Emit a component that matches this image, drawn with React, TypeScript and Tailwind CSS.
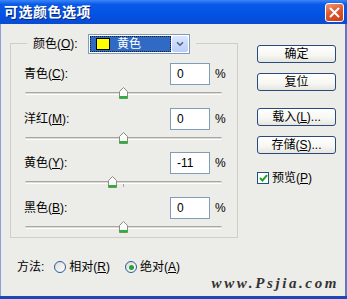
import React from "react";

interface Channel {
  label: string;
  hotkey: string;
  value: number;
  gap: string;
}

const channels: Channel[] = [
  { label: "青色", hotkey: "C", value: 0, gap: "mt-[9px]" },
  { label: "洋红", hotkey: "M", value: 0, gap: "mt-[7px]" },
  { label: "黄色", hotkey: "Y", value: -11, gap: "mt-[6px]" },
  { label: "黑色", hotkey: "B", value: 0, gap: "mt-[7px]" },
];

const Thumb = () => (
  <svg width="9" height="12" viewBox="0 0 9 12">
    <path d="M0.5 4.5 L4.5 0.5 L8.5 4.5 V11.5 H0.5 Z" fill="#fbfbf8" stroke="#8c8c86" />
    <rect x="0.5" y="9" width="8" height="2.5" fill="#2fae3a" />
  </svg>
);

const Slider = ({ value }: { value: number }) => {
  const center = 98.5 + value * 0.985;
  return (
    <div className="relative ml-[14px] h-[16px] w-[197px]">
      <div className="absolute left-0 right-0 top-[7px] h-[3px] rounded-[2px] border-t border-t-[#a7a6a0] border-b border-b-white bg-[#dcdbd5]" />
      <div className="absolute left-[98px] top-[10px] h-[3px] w-px bg-[#a7a6a0]" />
      <div className="absolute top-[2px]" style={{ left: center - 4.5 }}>
        <Thumb />
      </div>
    </div>
  );
};

const Button = ({ children, className }: { children: React.ReactNode; className?: string }) => (
  <div
    className={
      "flex h-[18px] w-[79px] items-center justify-center rounded-[3px] border border-[#2a4a7c] bg-[linear-gradient(180deg,#ffffff_0%,#f6f6f2_60%,#e6e5de_100%)] text-[12px] text-black " +
      (className ?? "")
    }
  >
    {children}
  </div>
);

const Radio = ({ checked }: { checked?: boolean }) => (
  <div className="flex h-[12px] w-[12px] items-center justify-center rounded-full border border-[#2a5a9a] bg-[linear-gradient(135deg,#dcdcd6,#ffffff)]">
    {checked ? <div className="h-[5px] w-[5px] rounded-full bg-[#28a238]" /> : null}
  </div>
);

export default function App() {
  return (
    <div className="h-[299px] w-[347px] overflow-hidden font-['Liberation_Sans','Noto_Sans_CJK_SC',sans-serif] text-[12px] text-black">
      <div className="flex h-[24px] items-center justify-between bg-[linear-gradient(180deg,#3b86f5_0%,#0a5ae9_18%,#0353e4_60%,#0a4bd2_100%)] pl-[4px] pr-[3px]">
        <span className="text-[14px] font-bold tracking-[0.5px] text-white [text-shadow:1px_1px_0_#0a2a80]">
          可选颜色选项
        </span>
        <div className="flex h-[19px] w-[19px] items-center justify-center rounded-[3px] border border-white bg-[linear-gradient(160deg,#ef9a78_0%,#e0582f_45%,#c83e18_100%)]">
          <svg width="11" height="11" viewBox="0 0 11 11">
            <path d="M1.5 1.5 L9.5 9.5 M9.5 1.5 L1.5 9.5" stroke="white" strokeWidth="2" strokeLinecap="round" />
          </svg>
        </div>
      </div>

      <div className="flex h-[272px] flex-col border-x border-l-[#8da0d6] border-r-[#5d78c8] bg-[#ecece8] border-r-2">
        <div className="flex pl-[9px] pt-[10px]">
          <div className="mt-[9px] w-[228px] border border-[#cfcfc6] pb-[2px]">
            <div className="-mt-[10px] ml-[16px] flex h-[20px] w-[169px] items-center bg-[#ecece8] pl-[6px]">
              <span className="w-[55px]">
                颜色(<u>O</u>):
              </span>
              <div className="flex h-[20px] w-[102px] items-center border border-[#7f9db9] bg-white p-px">
                <div className="flex h-full w-[82px] items-center border border-dotted border-[#1b1b1b] bg-[#316ac5] pl-[5px]">
                  <div className="h-[12px] w-[14px] border border-black bg-[#ffff00]" />
                  <span className="ml-[7px] text-white">黄色</span>
                </div>
                <div className="ml-px flex h-full w-[16px] items-center justify-center rounded-[2px] bg-[linear-gradient(180deg,#dde7fd,#b9cdf8)]">
                  <svg width="8" height="6" viewBox="0 0 8 6">
                    <path d="M1 1.2 L4 4.2 L7 1.2" stroke="#4d6185" strokeWidth="1.6" fill="none" />
                  </svg>
                </div>
              </div>
            </div>

            {channels.map((c) => (
              <div key={c.hotkey} className={c.gap}>
                <div className="flex h-[22px] items-center">
                  <span className="ml-[13px] w-[146px]">
                    {c.label}(<u>{c.hotkey}</u>):
                  </span>
                  <div className="flex h-[22px] w-[40px] items-center border border-[#7f9db9] bg-white pl-[6px]">
                    {c.value}
                  </div>
                  <span className="ml-[5px]">%</span>
                </div>
                <Slider value={c.value} />
              </div>
            ))}
          </div>

          <div className="ml-[19px] mt-[11px] flex flex-col">
            <Button>确定</Button>
            <Button className="mt-[10px]">复位</Button>
            <Button className="mt-[17px]">
              载入(<u>L</u>)...
            </Button>
            <Button className="mt-[10px]">
              存储(<u>S</u>)...
            </Button>
            <div className="mt-[15px] flex items-center">
              <div className="flex h-[12px] w-[12px] items-center justify-center border border-[#1c5180] bg-white">
                <svg width="9" height="8" viewBox="0 0 9 8">
                  <path d="M1 4 L3.5 6.5 L8 1.2" stroke="#21a121" strokeWidth="2" fill="none" />
                </svg>
              </div>
              <span className="ml-[3px]">
                预览(<u>P</u>)
              </span>
            </div>
          </div>
        </div>

        <div className="ml-[16px] mt-[21px] flex h-[16px] items-center">
          <span>方法:</span>
          <div className="ml-[10px]">
            <Radio />
          </div>
          <span className="ml-[3px]">
            相对(<u>R</u>)
          </span>
          <div className="ml-[15px]">
            <Radio checked />
          </div>
          <span className="ml-[3px]">
            绝对(<u>A</u>)
          </span>
        </div>
        <div className="flex h-[16px] justify-end pr-[6px]">
          <span className="font-['Liberation_Serif',serif] text-[15px] font-bold italic leading-[16px] tracking-[2.6px] text-[#333]">
            www.Psjia.com
          </span>
        </div>
      </div>
      <div className="h-[3px] bg-[#1f46b8]" />
    </div>
  );
}
